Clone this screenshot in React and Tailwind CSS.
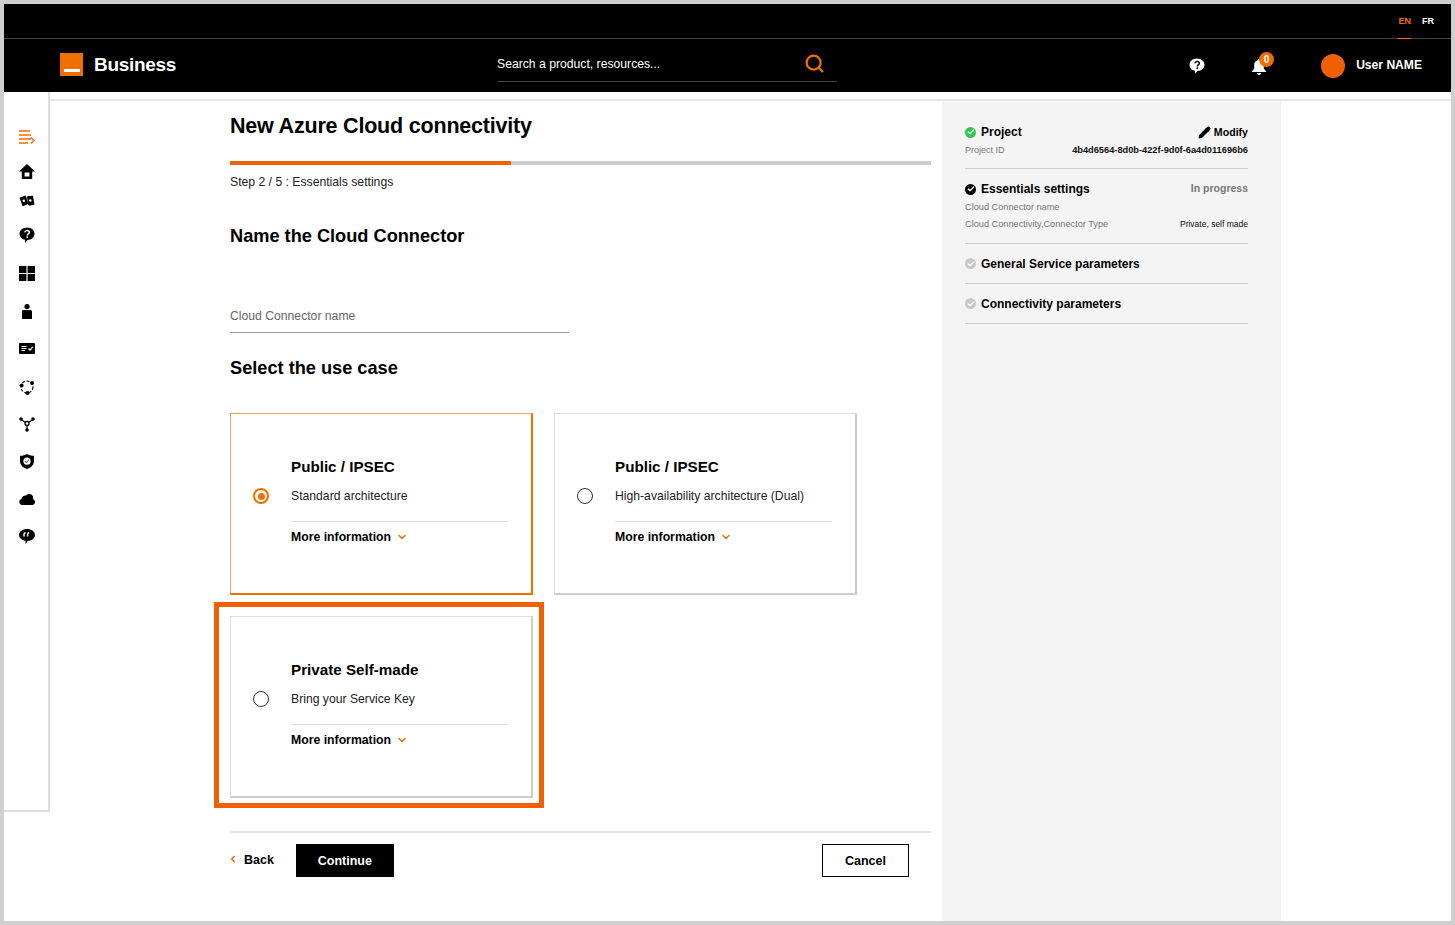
import { Check, ChevronDown, ChevronLeft, Pencil, Search } from 'lucide-react';

const font = { sans: "font-['Liberation_Sans',Arial,sans-serif]" };

const MenuIcon = () => (
  <svg width="16" height="14" viewBox="0 0 16 14" fill="none" stroke="#f16e00" strokeWidth="1.5">
    <path d="M0 1h11M0 5h12M0 9h12M0 13h9M12 7.500l3 3-3 3" />
  </svg>
);
const HomeIcon = () => (
  <svg width="16" height="15" viewBox="0 0 16 15" fill="#000">
    <path d="M8 0 16 7.600h-2.800V15H2.800V7.600H0Zm-2.400 8.400v4.200h4.800V8.400Z" fillRule="evenodd" />
  </svg>
);
const CardsIcon = () => (
  <svg width="16" height="13" viewBox="0 0 16 13" fill="#000">
    <path d="M.5 2.800 6.800.5l2.600 8.600-5.800 2.200Z" />
    <path d="M8 1.300 14 .8l1.500 8.700-5.200 1.200-1.200-1Z" />
    <circle cx="4.800" cy="5.800" r="1.200" fill="#fff" />
    <circle cx="11.300" cy="5.500" r="1.200" fill="#fff" />
  </svg>
);
const HelpBubble = ({ fill = '#000', mark = '#fff' }) => (
  <svg width="16" height="16" viewBox="0 0 16 16">
    <path d="M8 .5c4.200 0 7.500 2.800 7.500 6.300S12.200 13 8.500 13L6 15.800V12.800C2.800 12.200.5 9.800.5 6.800.5 3.300 3.800.5 8 .5Z" fill={fill} />
    <path d="M5.800 5.300C6 4 7 3.400 8.100 3.400c1.300 0 2.200.8 2.200 1.900 0 1.700-2 1.600-2 3.200" fill="none" stroke={mark} strokeWidth="1.500" />
    <rect x="7.500" y="9.300" width="1.600" height="1.600" fill={mark} />
  </svg>
);
const GridIcon = () => (
  <svg width="16" height="15" viewBox="0 0 16 15" fill="#000">
    <path d="M0 0h7.400v7H0zM8.600 0H16v7H8.600zM0 8h7.400v7H0zM8.600 8H16v7H8.600z" />
  </svg>
);
const PersonIcon = () => (
  <svg width="10" height="15" viewBox="0 0 10 15" fill="#000">
    <circle cx="5" cy="2.600" r="2.600" />
    <path d="M1.500 6h7A1.500 1.500 0 0 1 10 7.500V15H0V7.500A1.500 1.500 0 0 1 1.500 6Z" />
  </svg>
);
const CheckCardIcon = () => (
  <svg width="16" height="11" viewBox="0 0 16 11">
    <rect width="16" height="11" rx="1" fill="#000" />
    <path d="M2.500 3.500h5M2.500 5.500h5M2.500 7.500h3.500" stroke="#fff" strokeWidth="1" />
    <path d="m9.500 5.500 1.600 1.600 2.600-3.200" stroke="#fff" strokeWidth="1.200" fill="none" />
  </svg>
);
const RingNodesIcon = () => (
  <svg width="16" height="16" viewBox="0 0 16 16">
    <circle cx="8" cy="8" r="6" fill="none" stroke="#000" strokeWidth="1.100" strokeDasharray="3 1.500" />
    <circle cx="2.600" cy="6.600" r="2" />
    <circle cx="13" cy="4" r="2" />
    <circle cx="8.500" cy="14" r="2" />
  </svg>
);
const NetworkIcon = () => (
  <svg width="16" height="15" viewBox="0 0 16 15">
    <path d="M2 2.500 8 6.500l6-4M8 6.500V13" fill="none" stroke="#000" strokeWidth="1.200" />
    <circle cx="2" cy="2" r="1.800" />
    <circle cx="14" cy="2" r="1.800" />
    <circle cx="8" cy="13" r="1.800" />
    <circle cx="8" cy="6.500" r="2" fill="#fff" stroke="#000" strokeWidth="1.300" />
  </svg>
);
const ShieldIcon = () => (
  <svg width="14" height="15" viewBox="0 0 14 15">
    <path d="M7 0c1.800 1.200 4 1.800 7 1.800V7c0 4-3 6.800-7 8-4-1.200-7-4-7-8V1.800C3 1.800 5.200 1.200 7 0Z" />
    <circle cx="7" cy="7.200" r="3.600" fill="#fff" />
    <path d="M5 7.200 6.500 8.700 9.200 5.600" stroke="#777" strokeWidth="1.200" fill="none" />
  </svg>
);
const CloudIcon = () => (
  <svg width="16" height="11" viewBox="0 0 16 11">
    <path d="M3 11A3 3 0 0 1 2.500 5.100 4.300 4.300 0 0 1 7 1.500 4.800 4.800 0 0 1 12.500 .5 4.500 4.500 0 0 1 14 5.200 3 3 0 0 1 13.500 11Z" />
  </svg>
);
const QuoteBubble = () => (
  <svg width="16" height="15" viewBox="0 0 16 15">
    <path d="M8 0c4.400 0 8 2.600 8 5.900s-3.600 5.900-7.200 5.900L6.500 15v-3.300C2.800 11.200 0 8.900 0 5.900 0 2.600 3.600 0 8 0Z" />
    <path d="M5 7.500V5.600c0-1 .6-1.600 1.600-1.800M8.600 7.500V5.600c0-1 .6-1.600 1.600-1.800" stroke="#fff" strokeWidth="1.500" fill="none" />
  </svg>
);
const BellIcon = () => (
  <svg width="14" height="16" viewBox="0 0 14 16" fill="#fff">
    <path d="M7 0c.8 0 1.300.5 1.300 1.200C10.600 1.800 11.800 3.600 11.800 6v3.400L14 12.400v.6H0v-.6l2.200-3V6c0-2.400 1.200-4.200 3.500-4.800C5.700.5 6.200 0 7 0Z" />
    <path d="M5 14h4a2 2 0 0 1-4 0Z" />
  </svg>
);

const sideIcons = [
  { key: 'menu', node: <MenuIcon />, cls: 'h-[14px] mt-[38px]' },
  { key: 'home', node: <HomeIcon />, cls: 'h-[15px] mt-[20px]' },
  { key: 'cards', node: <CardsIcon />, cls: 'h-[13px] mt-[16px]' },
  { key: 'help', node: <HelpBubble />, cls: 'h-[16px] mt-[19px]' },
  { key: 'grid', node: <GridIcon />, cls: 'h-[15px] mt-[23px]' },
  { key: 'person', node: <PersonIcon />, cls: 'h-[15px] mt-[23px]' },
  { key: 'check', node: <CheckCardIcon />, cls: 'h-[11px] mt-[24px]' },
  { key: 'ring', node: <RingNodesIcon />, cls: 'h-[16px] mt-[25px]' },
  { key: 'net', node: <NetworkIcon />, cls: 'h-[15px] mt-[22px]' },
  { key: 'shield', node: <ShieldIcon />, cls: 'h-[15px] mt-[22px]' },
  { key: 'cloud', node: <CloudIcon />, cls: 'h-[11px] mt-[25px]' },
  { key: 'quote', node: <QuoteBubble />, cls: 'h-[15px] mt-[24px]' },
];

const UseCaseCard = ({ title, description, selected, highlighted }) => (
  <div className={`relative h-[182px] bg-white pl-[60px] pr-[23px] pt-[43px] ${selected ? 'border border-[#f9a05c] border-r-2 border-b-2 border-r-[#f16e00] border-b-[#f16e00]' : 'border border-[#ddd] border-r-2 border-b-2 border-r-[#ccc] border-b-[#ccc]'}`}>
    {highlighted && <div className="absolute left-[-17px] top-[-15px] h-[206px] w-[330px] border-[5px] border-[#f16000]" />}
    <div className="text-[15.200px] font-bold leading-[20px] text-black">{title}</div>
    <div className="relative mt-[9px] text-[12.200px] leading-[20px] text-[#222]">
      {description}
      <span className={`absolute left-[-38px] top-[2px] flex h-[16px] w-[16px] items-center justify-center rounded-full border bg-white ${selected ? 'border-[2px] border-[#f16e00]' : 'border-[#333]'}`}>
        {selected && <span className="h-[7px] w-[7px] rounded-full bg-[#f16e00]" />}
      </span>
    </div>
    <div className="mt-[15px] border-t border-[#ddd] pt-[5px] text-[12.250px] font-bold leading-[20px] text-black">
      <span className="flex items-center gap-[5px]">
        More information
        <ChevronDown size={12} strokeWidth={3} color="#f16e00" />
      </span>
    </div>
  </div>
);

const StepHead = ({ color, title }) => (
  <div className="flex items-center gap-[5px]">
    <span className={`flex h-[11px] w-[11px] items-center justify-center rounded-full ${color}`}>
      <Check size={8} strokeWidth={4} color="#fff" />
    </span>
    <span className="text-[12px] font-bold leading-[16px] text-black">{title}</span>
  </div>
);

export default function App() {
  return (
    <div className={`${font.sans} h-[925px] w-[1455px] overflow-hidden border-4 border-[#cfcfcf] bg-white`}>
      <header className="bg-black">
        <div className="flex h-[35px] items-end justify-end gap-[11px] border-b border-[#444] pr-[17px] text-[9px] font-bold leading-[11px]">
          <span className="mb-[-1px] h-[23px] border-b border-[#f16e00] pl-[1px] text-[#f16e00]">EN</span>
          <span className="h-[22px] text-white">FR</span>
        </div>
        <div className="flex h-[53px] items-center pl-[56px] pr-[29px]">
          <div className="mt-[-2px] flex w-[437px] items-center gap-[11px]">
            <div className="flex h-[23px] w-[23px] items-end justify-center bg-[#f16e00] pb-[4px]">
              <span className="h-[3px] w-[16px] bg-white" />
            </div>
            <span className="text-[19px] font-bold leading-[24px] tracking-[-0.3px] text-white">Business</span>
          </div>
          <div className="mt-[-2px] flex h-[34px] w-[340px] items-center justify-between border-b border-[#444] pb-[1px] pr-[12px]">
            <span className="text-[12.200px] leading-[16px] text-white">Search a product, resources...</span>
            <Search size={21} strokeWidth={2.500} color="#f16e00" />
          </div>
          <div className="ml-auto flex items-center">
            <HelpBubble fill="#fff" mark="#000" />
            <div className="relative ml-[47px] mt-[2px]">
              <BellIcon />
              <span className="absolute left-[7px] top-[-7px] flex h-[15px] w-[15px] items-center justify-center rounded-full bg-[#f16e00] text-[10px] font-bold text-white">0</span>
            </div>
            <span className="ml-[55px] h-[24px] w-[24px] rounded-full bg-[#f16000]" />
            <span className="ml-[11px] text-[12.100px] font-bold text-white">User NAME</span>
          </div>
        </div>
      </header>

      <div className="flex h-[829px]">
        <aside className="flex h-[720px] w-[46px] flex-col items-center border-r-2 border-b-2 border-[#dedede] bg-white pl-[1px]">
          {sideIcons.map((item) => (
            <div key={item.key} className={`flex items-center justify-center ${item.cls}`}>{item.node}</div>
          ))}
        </aside>

        <div className="flex-1 pt-[7px]">
          <div className="flex h-[822px] border-t-2 border-[#e6e6e6]">
            <main className="w-[892px] pl-[180px] pr-[11px]">
              <h1 className="mt-[11px] text-[21.500px] font-bold leading-[28px] tracking-[-0.2px] text-black">New Azure Cloud connectivity</h1>
              <div className="mt-[21px] flex h-[4px] bg-[#cccccc]">
                <div className="w-[281px] bg-[#f16000]" />
              </div>
              <p className="mt-[8px] text-[12.200px] leading-[18px] text-[#222]">Step 2 / 5 : Essentials settings</p>
              <h2 className="mt-[33px] text-[18.200px] font-bold leading-[24px] text-black">Name the Cloud Connector</h2>
              <div className="mt-[59px] w-[339px] border-b border-[#999] pb-[7px] text-[12.200px] leading-[18px] text-[#666]">Cloud Connector name</div>
              <h2 className="mt-[23px] text-[18.200px] font-bold leading-[24px] text-black">Select the use case</h2>
              <div className="mt-[33px] grid grid-cols-[303px_303px] gap-x-[21px] gap-y-[21px]">
                <UseCaseCard title="Public / IPSEC" description="Standard architecture" selected />
                <UseCaseCard title="Public / IPSEC" description="High-availability architecture (Dual)" />
                <UseCaseCard title="Private Self-made" description="Bring your Service Key" highlighted />
              </div>
              <div className="mt-[33px] flex items-center border-t-2 border-[#e6e6e6] pt-[11px] pr-[22px]">
                <ChevronLeft size={10} strokeWidth={4} color="#f16000" className="mt-[-3px] ml-[-2px]" />
                <span className="ml-[6px] text-[12.500px] font-bold text-black">Back</span>
                <button className="ml-[22px] h-[33px] w-[98px] bg-black pt-[1px] text-[12.500px] font-bold text-white">Continue</button>
                <button className="ml-auto h-[33px] w-[87px] border border-black bg-white pt-[1px] text-[12.500px] font-bold text-black">Cancel</button>
              </div>
            </main>

            <section className="w-[339px] bg-[#f4f4f4] pl-[23px] pr-[33px] pt-[23px]">
              <div className="flex items-center justify-between leading-[16px]">
                <StepHead color="bg-[#32c850]" title="Project" />
                <span className="flex items-center gap-[3px] text-[10.600px] font-bold text-black">
                  <Pencil size={13} fill="#000" color="#000" />Modify
                </span>
              </div>
              <div className="mt-[3px] flex items-center justify-between border-b border-[#ccc] pb-[11px] leading-[14px]">
                <span className="text-[9px] text-[#777]">Project ID</span>
                <span className="text-[9.250px] font-bold text-[#111]">4b4d6564-8d0b-422f-9d0f-6a4d011696b6</span>
              </div>
              <div className="mt-[12px] flex items-center justify-between">
                <StepHead color="bg-black" title="Essentials settings" />
                <span className="text-[10.500px] font-bold text-[#777]">In progress</span>
              </div>
              <div className="mt-[3px] text-[9.200px] leading-[14px] text-[#777]">Cloud Connector name</div>
              <div className="mt-[3px] flex items-center justify-between border-b border-[#ccc] pb-[12px] leading-[14px]">
                <span className="text-[9.200px] text-[#777]">Cloud Connectivity,Connector Type</span>
                <span className="text-[8.500px] text-[#111]">Private, self made</span>
              </div>
              <div className="flex h-[40px] items-center border-b border-[#ccc]">
                <StepHead color="bg-[#c8c8c8]" title="General Service parameters" />
              </div>
              <div className="flex h-[40px] items-center border-b border-[#ccc]">
                <StepHead color="bg-[#c8c8c8]" title="Connectivity parameters" />
              </div>
            </section>
          </div>
        </div>
      </div>
    </div>
  );
}
